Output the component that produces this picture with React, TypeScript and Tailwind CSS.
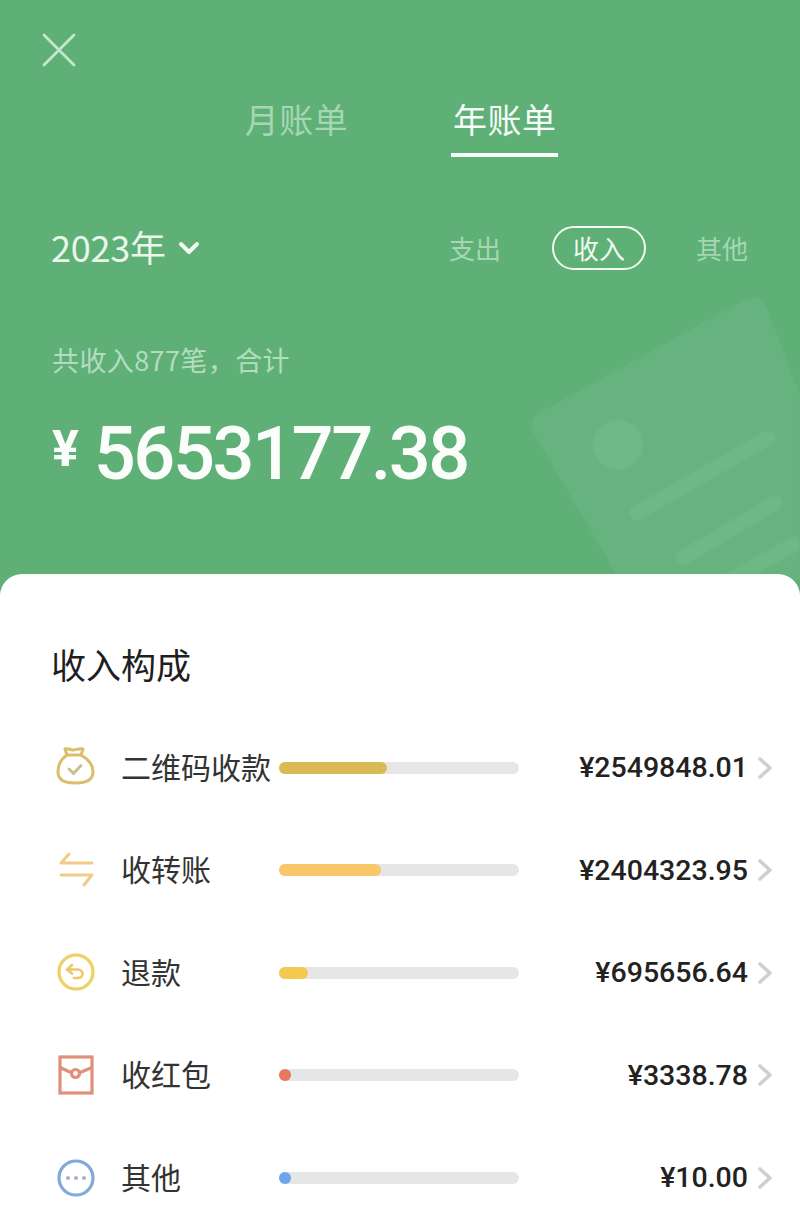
import React from 'react';

const cjk = { fontFamily: '"Noto Sans CJK SC", sans-serif' };

const BagIcon = () => (
  <svg width="44" height="44" viewBox="0 0 44 44" fill="none" stroke="#d9bf6a" strokeWidth="3" strokeLinecap="round" strokeLinejoin="round">
    <path d="M15 9 13 3c3-1 6 1 8 1 3 0 6-2 10-1l-2 6" />
    <path d="M15 9h14c7 4 12 10 12 17 0 7-6 11-18 11S6 33 6 26c0-7 3-13 9-17Z" />
    <path d="m17 23 4.500 4.500L29 19.500" stroke="#c9c08e" />
  </svg>
);

const TransferIcon = () => (
  <svg width="44" height="44" viewBox="0 0 44 44" fill="none" stroke="#f0cc88" strokeWidth="3" strokeLinecap="round" strokeLinejoin="round">
    <path d="M9 15h31M9 15l8-9" />
    <path d="M9 27h31M40 27l-8 10" />
  </svg>
);

const RefundIcon = () => (
  <svg width="44" height="44" viewBox="0 0 44 44" fill="none" strokeLinecap="round" strokeLinejoin="round">
    <circle cx="24" cy="21" r="17" stroke="#ecd062" strokeWidth="3.200" />
    <path d="M20 14l-5 4.500 5 4M15 18.500h11c2.500 0 4.500 1.800 4.500 4.200S28.500 27 26 27h-4" stroke="#e8c964" strokeWidth="2.600" />
  </svg>
);

const RedPacketIcon = () => (
  <svg width="44" height="44" viewBox="0 0 44 44" fill="none" stroke="#df8f7b" strokeWidth="3.200" strokeLinejoin="miter">
    <rect x="8" y="4" width="32" height="36" />
    <path d="M8 14.500 19 19.500M40 14.500 28 19.500" />
    <circle cx="23.500" cy="20.500" r="4" />
  </svg>
);

const MoreIcon = () => (
  <svg width="44" height="44" viewBox="0 0 44 44" fill="none">
    <circle cx="24" cy="22" r="17" stroke="#84a9d9" strokeWidth="3.200" />
    <circle cx="16" cy="22" r="2" fill="#a9b4c6" />
    <circle cx="24" cy="22" r="2" fill="#a9b4c6" />
    <circle cx="32" cy="22" r="2" fill="#a9b4c6" />
  </svg>
);

const rows = [
  { icon: <BagIcon />, label: '二维码收款', amount: '¥2549848.01', barClass: 'w-[108px] bg-[#d8bb55]' },
  { icon: <TransferIcon />, label: '收转账', amount: '¥2404323.95', barClass: 'w-[102px] bg-[#f7c768]' },
  { icon: <RefundIcon />, label: '退款', amount: '¥695656.64', barClass: 'w-[29px] bg-[#f5c84f]' },
  { icon: <RedPacketIcon />, label: '收红包', amount: '¥3338.78', barClass: 'w-[12px] bg-[#e8775c]' },
  { icon: <MoreIcon />, label: '其他', amount: '¥10.00', barClass: 'w-[12px] bg-[#6ea3ee]' },
];

const App: React.FC = () => {
  return (
    <div className="relative h-[1213px] w-[800px] overflow-hidden bg-[#5fb077]" style={cjk}>
      {/* Faded ticket behind the total */}
      <svg className="absolute left-[525px] top-[295px] blur-[1px]" width="275" height="285" viewBox="0 0 275 285" fill="none">
        <path d="M14 118 C6 124 5 132 10 140 L95 285 L275 285 L275 100 L242 14 C238 3 228 0 218 6 Z" fill="#67b380" />
        <circle cx="93" cy="150" r="25" fill="#6fb888" />
        <path d="M112 218 L243 143 M158 263 L250 208 M205 285 L268 250" stroke="#6cb986" strokeWidth="15" strokeLinecap="round" />
      </svg>

      {/* Header */}
      <div className="relative h-[574px] px-[52px]">
        <div className="pt-[33px]">
          <svg className="-ml-[10px]" width="34" height="34" viewBox="0 0 34 34" fill="none" stroke="#c4e8cc" strokeWidth="2.800" strokeLinecap="round">
            <path d="M2 2 32 32M32 2 2 32" />
          </svg>
        </div>

        <div className="mt-[27px] flex justify-center gap-[103px] pl-[3px]">
          <div className="text-[34px] leading-[50px] tracking-[0.5px] text-[#a6d6b3]">月账单</div>
          <div className="flex flex-col items-center">
            <div className="text-[34px] leading-[50px] tracking-[0.5px] text-[#f5fbf6]">年账单</div>
            <div className="mt-[9px] h-[4px] w-[107px] bg-[#f7fcf8]" />
          </div>
        </div>

        <div className="mt-[67px] flex items-center justify-between">
          <div className="flex items-center gap-[12px] -ml-[1px]">
            <span className="pb-[3px] text-[36px] leading-[44px] tracking-[-0.2px] text-[#eaf6ec]">2023年</span>
            <svg width="22" height="14" viewBox="0 0 22 14" fill="none" stroke="#f3faf4" strokeWidth="4" strokeLinecap="round" strokeLinejoin="round">
              <path d="M3 3 11 11 19 3" />
            </svg>
          </div>
          <div className="flex items-center">
            <span className="text-[26px] leading-[44px] text-[#a6d6b3]">支出</span>
            <span className="ml-[51px] flex h-[44px] w-[94px] items-center justify-center rounded-full border-2 border-[#f0f9f2] pb-[1px] text-[26px] text-[#f0f9f2]">收入</span>
            <span className="ml-[50px] text-[26px] leading-[44px] text-[#a6d6b3]">其他</span>
          </div>
        </div>

        <div className="mt-[69px] text-[27px] leading-[40px] tracking-[0.4px] text-[#b4dcbf]">共收入877笔，合计</div>

        <div className="mt-[34px] flex items-start text-[#fbfdfb]" style={{ fontFamily: 'Roboto, sans-serif' }}>
          <span className="mt-[5px] text-[50px] leading-[60px] font-bold">¥</span>
          <span className="ml-[15px] text-[74px] leading-[80px] font-medium tracking-[-2.500px]">5653177.38</span>
        </div>
      </div>

      {/* Sheet */}
      <div className="relative h-[639px] rounded-t-[22px] bg-white px-[52px] pt-[65px]">
        <div className="-ml-[1px] text-[35px] leading-[50px] text-[#1f1f1f]">收入构成</div>
        <div className="mt-[56.500px] flex flex-col gap-[58.500px]">
          {rows.map((row) => (
            <div key={row.label} className="flex h-[44px] items-center">
              <div className="w-[70px] shrink-0">{row.icon}</div>
              <div className="-ml-[1px] w-[158px] shrink-0 pb-[4px] text-[30px] leading-[40px] whitespace-nowrap text-[#333333]">{row.label}</div>
              <div className="h-[12px] w-[240px] shrink-0 rounded-full bg-[#e6e6e6]">
                <div className={`h-full rounded-full ${row.barClass}`} />
              </div>
              <div className="flex-1 pt-[2px] text-right text-[28.500px] font-medium whitespace-nowrap text-[#222222]" style={{ fontFamily: 'Roboto, sans-serif' }}>
                {row.amount}
              </div>
              <svg className="ml-[9px] -mr-[25px] shrink-0" width="16" height="24" viewBox="0 0 16 24" fill="none" stroke="#cfcfcf" strokeWidth="3.600" strokeLinecap="round" strokeLinejoin="round">
                <path d="M3 3 13 12 3 21" />
              </svg>
            </div>
          ))}
        </div>
      </div>
    </div>
  );
};

export default App;
